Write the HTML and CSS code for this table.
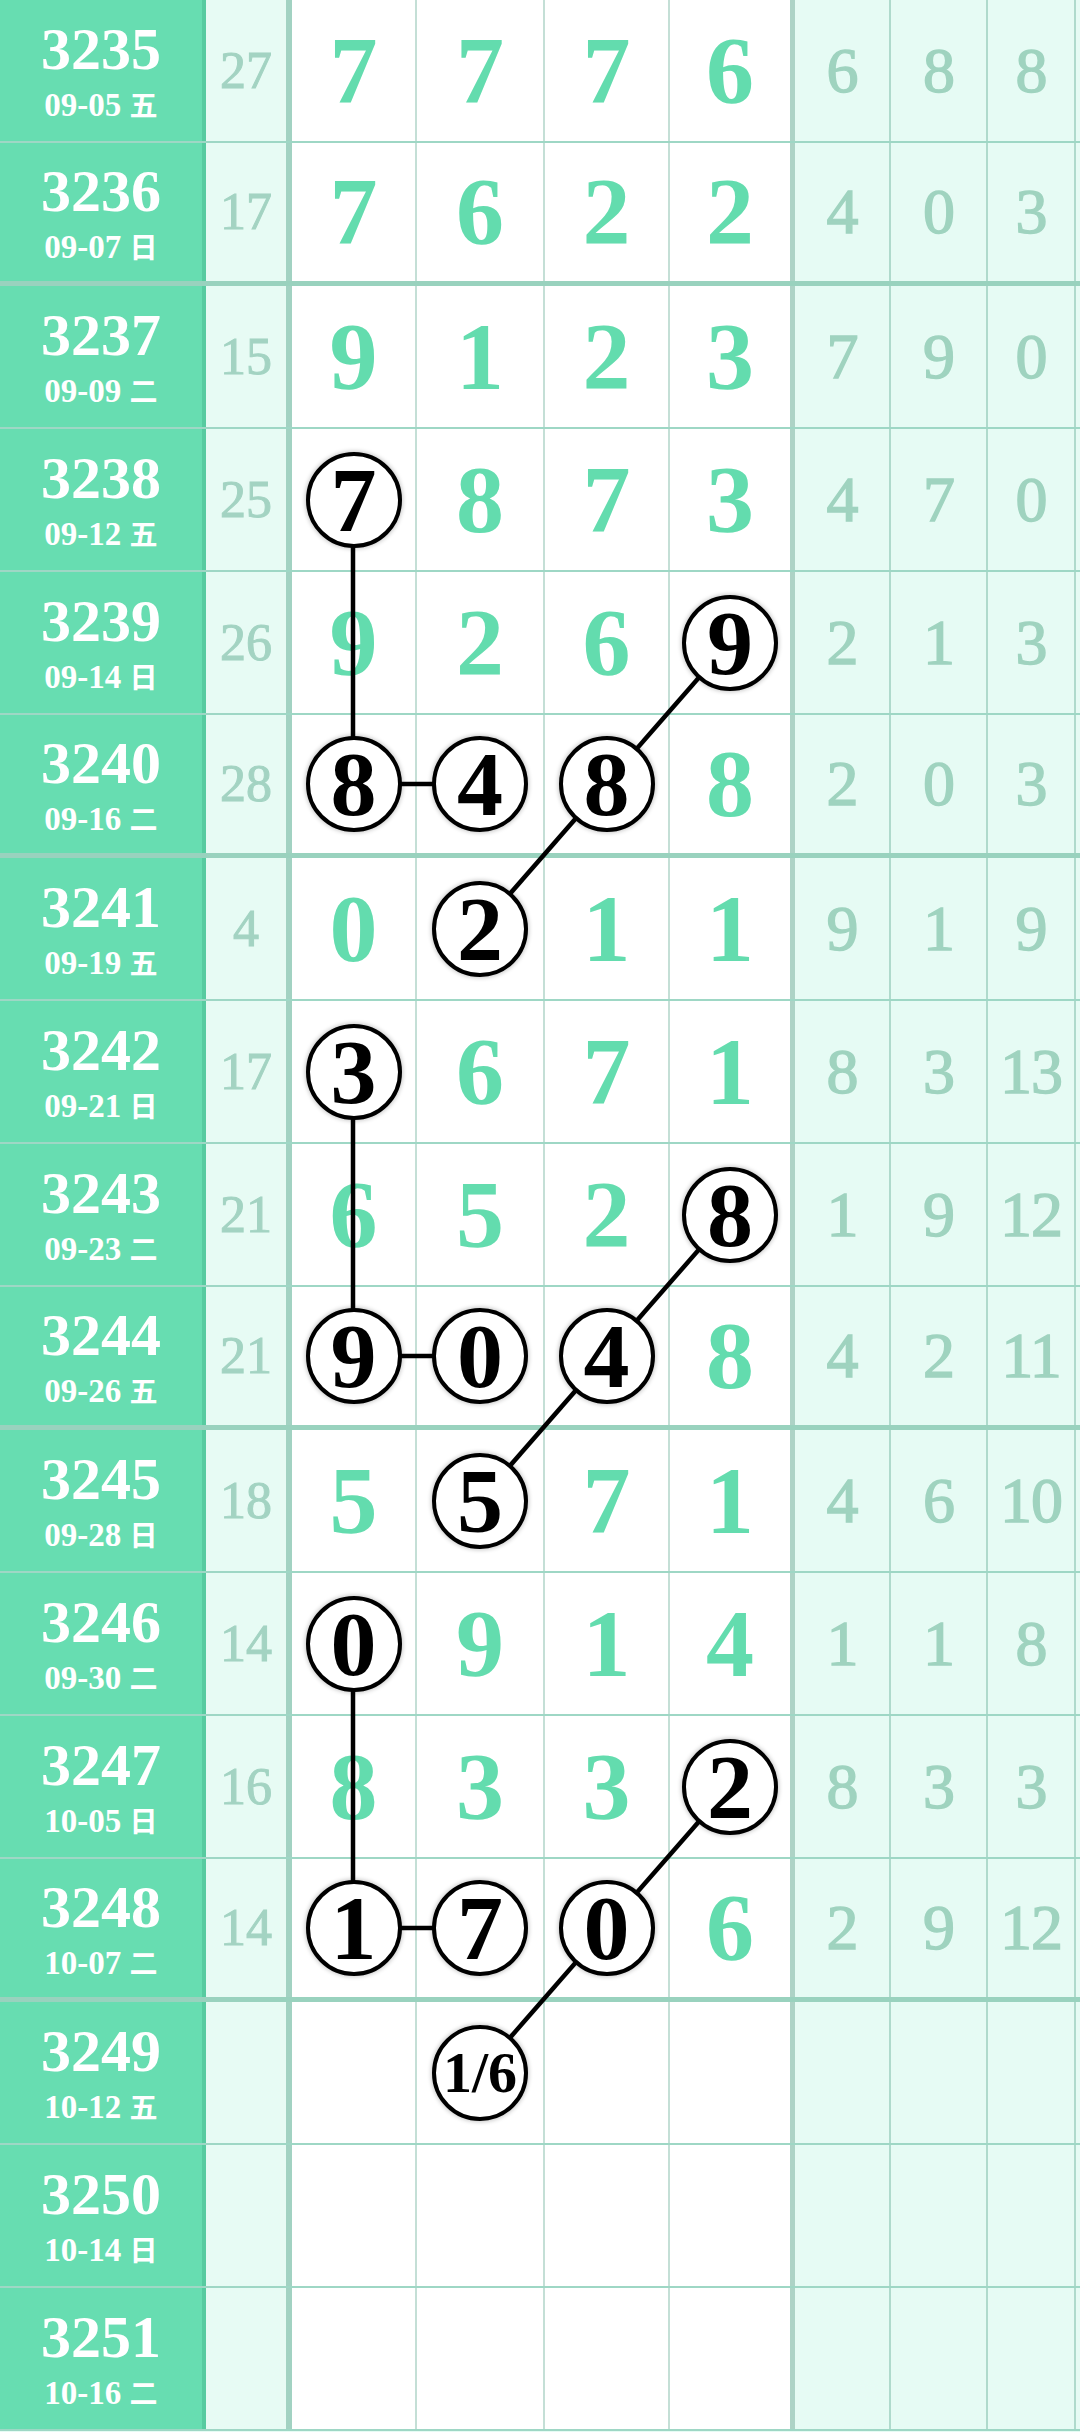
FILE: index.html
```html
<!DOCTYPE html>
<html lang="zh">
<head>
<meta charset="utf-8">
<title>走势图</title>
<link rel="stylesheet" href="styles.css">
</head>
<body>
<div class="chart">
  <div class="row"><div class="c-id"><div class="num">3235</div><div class="date">09-05 <span class="wk">五</span></div></div><div class="c-sum">27</div><div class="c-d">7</div><div class="c-d">7</div><div class="c-d">7</div><div class="c-d c-d4">6</div><div class="c-r">6</div><div class="c-r">8</div><div class="c-r">8</div></div>
  <div class="row sep"><div class="c-id"><div class="num">3236</div><div class="date">09-07 <span class="wk">日</span></div></div><div class="c-sum">17</div><div class="c-d">7</div><div class="c-d">6</div><div class="c-d">2</div><div class="c-d c-d4">2</div><div class="c-r">4</div><div class="c-r">0</div><div class="c-r">3</div></div>
  <div class="row"><div class="c-id"><div class="num">3237</div><div class="date">09-09 <span class="wk">二</span></div></div><div class="c-sum">15</div><div class="c-d">9</div><div class="c-d">1</div><div class="c-d">2</div><div class="c-d c-d4">3</div><div class="c-r">7</div><div class="c-r">9</div><div class="c-r">0</div></div>
  <div class="row"><div class="c-id"><div class="num">3238</div><div class="date">09-12 <span class="wk">五</span></div></div><div class="c-sum">25</div><div class="c-d"><span class="ball">7</span></div><div class="c-d">8</div><div class="c-d">7</div><div class="c-d c-d4">3</div><div class="c-r">4</div><div class="c-r">7</div><div class="c-r">0</div></div>
  <div class="row"><div class="c-id"><div class="num">3239</div><div class="date">09-14 <span class="wk">日</span></div></div><div class="c-sum">26</div><div class="c-d">9</div><div class="c-d">2</div><div class="c-d">6</div><div class="c-d c-d4"><span class="ball">9</span></div><div class="c-r">2</div><div class="c-r">1</div><div class="c-r">3</div></div>
  <div class="row sep"><div class="c-id"><div class="num">3240</div><div class="date">09-16 <span class="wk">二</span></div></div><div class="c-sum">28</div><div class="c-d"><span class="ball">8</span></div><div class="c-d"><span class="ball">4</span></div><div class="c-d"><span class="ball">8</span></div><div class="c-d c-d4">8</div><div class="c-r">2</div><div class="c-r">0</div><div class="c-r">3</div></div>
  <div class="row"><div class="c-id"><div class="num">3241</div><div class="date">09-19 <span class="wk">五</span></div></div><div class="c-sum">4</div><div class="c-d">0</div><div class="c-d"><span class="ball">2</span></div><div class="c-d">1</div><div class="c-d c-d4">1</div><div class="c-r">9</div><div class="c-r">1</div><div class="c-r">9</div></div>
  <div class="row"><div class="c-id"><div class="num">3242</div><div class="date">09-21 <span class="wk">日</span></div></div><div class="c-sum">17</div><div class="c-d"><span class="ball">3</span></div><div class="c-d">6</div><div class="c-d">7</div><div class="c-d c-d4">1</div><div class="c-r">8</div><div class="c-r">3</div><div class="c-r">13</div></div>
  <div class="row"><div class="c-id"><div class="num">3243</div><div class="date">09-23 <span class="wk">二</span></div></div><div class="c-sum">21</div><div class="c-d">6</div><div class="c-d">5</div><div class="c-d">2</div><div class="c-d c-d4"><span class="ball">8</span></div><div class="c-r">1</div><div class="c-r">9</div><div class="c-r">12</div></div>
  <div class="row sep"><div class="c-id"><div class="num">3244</div><div class="date">09-26 <span class="wk">五</span></div></div><div class="c-sum">21</div><div class="c-d"><span class="ball">9</span></div><div class="c-d"><span class="ball">0</span></div><div class="c-d"><span class="ball">4</span></div><div class="c-d c-d4">8</div><div class="c-r">4</div><div class="c-r">2</div><div class="c-r">11</div></div>
  <div class="row"><div class="c-id"><div class="num">3245</div><div class="date">09-28 <span class="wk">日</span></div></div><div class="c-sum">18</div><div class="c-d">5</div><div class="c-d"><span class="ball">5</span></div><div class="c-d">7</div><div class="c-d c-d4">1</div><div class="c-r">4</div><div class="c-r">6</div><div class="c-r">10</div></div>
  <div class="row"><div class="c-id"><div class="num">3246</div><div class="date">09-30 <span class="wk">二</span></div></div><div class="c-sum">14</div><div class="c-d"><span class="ball">0</span></div><div class="c-d">9</div><div class="c-d">1</div><div class="c-d c-d4">4</div><div class="c-r">1</div><div class="c-r">1</div><div class="c-r">8</div></div>
  <div class="row"><div class="c-id"><div class="num">3247</div><div class="date">10-05 <span class="wk">日</span></div></div><div class="c-sum">16</div><div class="c-d">8</div><div class="c-d">3</div><div class="c-d">3</div><div class="c-d c-d4"><span class="ball">2</span></div><div class="c-r">8</div><div class="c-r">3</div><div class="c-r">3</div></div>
  <div class="row sep"><div class="c-id"><div class="num">3248</div><div class="date">10-07 <span class="wk">二</span></div></div><div class="c-sum">14</div><div class="c-d"><span class="ball">1</span></div><div class="c-d"><span class="ball">7</span></div><div class="c-d"><span class="ball">0</span></div><div class="c-d c-d4">6</div><div class="c-r">2</div><div class="c-r">9</div><div class="c-r">12</div></div>
  <div class="row"><div class="c-id"><div class="num">3249</div><div class="date">10-12 <span class="wk">五</span></div></div><div class="c-sum"></div><div class="c-d"></div><div class="c-d"><span class="ball small">1/6</span></div><div class="c-d"></div><div class="c-d c-d4"></div><div class="c-r"></div><div class="c-r"></div><div class="c-r"></div></div>
  <div class="row"><div class="c-id"><div class="num">3250</div><div class="date">10-14 <span class="wk">日</span></div></div><div class="c-sum"></div><div class="c-d"></div><div class="c-d"></div><div class="c-d"></div><div class="c-d c-d4"></div><div class="c-r"></div><div class="c-r"></div><div class="c-r"></div></div>
  <div class="row"><div class="c-id"><div class="num">3251</div><div class="date">10-16 <span class="wk">二</span></div></div><div class="c-sum"></div><div class="c-d"></div><div class="c-d"></div><div class="c-d"></div><div class="c-d c-d4"></div><div class="c-r"></div><div class="c-r"></div><div class="c-r"></div></div>

  <svg class="links" width="1080" height="2432" viewBox="0 0 1080 2432">
    <g stroke="#000" stroke-width="4.5" fill="none">
      <line x1="353" y1="499" x2="353" y2="784"/>
      <line x1="353" y1="784" x2="480" y2="784"/>
      <line x1="730" y1="642" x2="480" y2="928"/>
      <line x1="353" y1="1071" x2="353" y2="1356"/>
      <line x1="353" y1="1356" x2="480" y2="1356"/>
      <line x1="730" y1="1214" x2="480" y2="1500"/>
      <line x1="353" y1="1643" x2="353" y2="1928"/>
      <line x1="353" y1="1928" x2="480" y2="1928"/>
      <line x1="730" y1="1786" x2="480" y2="2072"/>
    </g>
  </svg>
</div>
</body>
</html>
```

FILE: styles.css
```css
html, body {
  margin: 0;
  padding: 0;
  background: #ffffff;
}

.chart {
  position: relative;
  width: 1080px;
  height: 2432px;
  overflow: hidden;
  font-family: "Liberation Serif", "Noto Sans CJK SC", serif;
  background: #e6fbf4;
}

.row {
  display: grid;
  grid-template-columns: 206px 86px 125px 128px 125px 125px 96px 97px 88px;
  height: 143px;
  box-sizing: border-box;
  border-bottom: 2px solid rgba(60, 165, 130, 0.42);
}

.row.sep {
  border-bottom-width: 5px;
  border-bottom-color: rgba(60, 160, 125, 0.45);
}

.row > div {
  box-sizing: border-box;
  display: flex;
  align-items: center;
  justify-content: center;
  line-height: 1;
}

.c-id {
  flex-direction: column;
  gap: 10px;
  background: #67ddb1;
  color: #ffffff;
  font-weight: bold;
  border-right: 4px solid rgba(40, 150, 110, 0.25);
}

.num {
  font-size: 60px;
  line-height: 1;
}

.date {
  font-size: 33px;
  line-height: 1;
  white-space: nowrap;
}

.wk {
  font-family: "Noto Sans CJK SC", sans-serif;
  font-size: 28px;
  font-weight: bold;
}

.c-sum {
  background: #e7fbf4;
  color: #a3d3c2;
  font-size: 52px;
  -webkit-text-stroke: 1px #a3d3c2;
  border-right: 6px solid rgba(60, 150, 120, 0.4);
}

.c-d {
  background: #ffffff;
  color: #63dcae;
  font-size: 96px;
  font-weight: bold;
  border-right: 2px solid rgba(60, 150, 120, 0.3);
}

.c-d4 {
  border-right: 5px solid rgba(60, 150, 120, 0.42);
}

.c-r {
  background: #e6fbf4;
  color: #9fd3bf;
  font-size: 64px;
  -webkit-text-stroke: 1.4px #9fd3bf;
  letter-spacing: -1px;
  border-right: 2px solid rgba(60, 150, 120, 0.32);
}

.ball {
  position: relative;
  z-index: 2;
  width: 96px;
  height: 96px;
  box-sizing: border-box;
  border: 4px solid #000000;
  border-radius: 50%;
  background: #ffffff;
  color: #000000;
  display: flex;
  align-items: center;
  justify-content: center;
  font-size: 92px;
  font-weight: bold;
  line-height: 1;
  box-shadow: 0 0 4px 1px rgba(0, 0, 0, 0.22);
}

.ball.small {
  font-size: 58px;
}

.links {
  position: absolute;
  left: 0;
  top: 0;
  z-index: 1;
  pointer-events: none;
}
```
